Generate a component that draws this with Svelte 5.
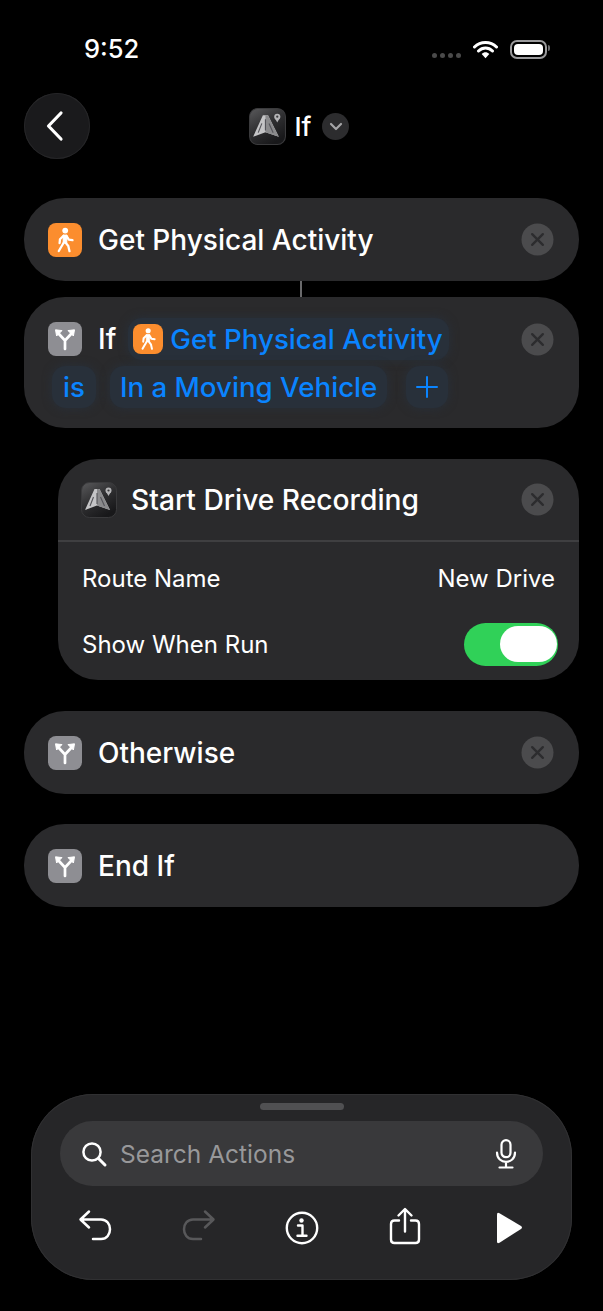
<script>
  let showWhenRun = $state(true);
</script>

{#snippet walkIcon()}
  <svg class="fill" viewBox="0 0 34 34">
    <circle cx="17.2" cy="7.6" r="2.9" fill="#fff" />
    <path d="M15 12 L19 12 L18.8 20 L15.2 20 Z" fill="#fff" stroke="#fff" stroke-width="0.8" stroke-linejoin="round" />
    <path d="M15.8 19.5 L10.8 28 M17.5 19.5 L20.3 23 L21.5 28.2 M15.5 12.8 L12 16.2 L11.6 20 M18.6 13 L20.8 16.6 L24.5 17.2" fill="none" stroke="#fff" stroke-width="2.3" stroke-linecap="round" stroke-linejoin="round" />
  </svg>
{/snippet}

{#snippet branchIcon()}
  <svg class="fill" viewBox="0 0 34 34">
    <path d="M17 27 V18.5 L10.5 11.5 M17 18.5 L23.5 11.5" fill="none" stroke="#fff" stroke-width="2.7" stroke-linecap="round" stroke-linejoin="round" />
    <path d="M7.5 7.8 L14 8.6 L8.6 14 Z M26.5 7.8 L20 8.6 L25.4 14 Z" fill="#fff" stroke="#fff" stroke-width="1" stroke-linejoin="round" />
  </svg>
{/snippet}

{#snippet closeButton()}
  <button class="close" aria-label="Remove">
    <svg viewBox="0 0 34 34" width="33" height="33">
      <circle cx="17" cy="17" r="16.5" fill="#4b4b4d" />
      <path d="M11.5 11.5 L22.5 22.5 M22.5 11.5 L11.5 22.5" stroke="#2c2c2e" stroke-width="2.4" stroke-linecap="round" />
    </svg>
  </button>
{/snippet}

{#snippet appIcon()}
  <svg class="fill" viewBox="0 0 36 36">
    <defs>
      <linearGradient id="tile" x1="0" y1="0" x2="0.6" y2="1">
        <stop offset="0" stop-color="#5a5a5c" />
        <stop offset="0.55" stop-color="#2e2e30" />
        <stop offset="1" stop-color="#18181a" />
      </linearGradient>
    </defs>
    <rect x="0.5" y="0.5" width="35" height="35" rx="8" fill="url(#tile)" stroke="#3a3a3c" />
    <path d="M13.5 7 L18.5 7 L29 28 L16 23.5 L4 28 Z" fill="#c4c4c6" />
    <path d="M16 7 L18.5 7 L29 28 L16 23.5 Z" fill="#8a8a8c" />
    <path d="M16 11 V22 M12.5 15 L9 24 M19.5 15 L23.5 24" stroke="#55555a" stroke-width="1.1" />
    <circle cx="27.5" cy="8.5" r="3" fill="#b4b4b6" />
    <circle cx="27.5" cy="8.5" r="1.1" fill="#3a3a3c" />
    <path d="M25.2 10 L27.5 14 L29.8 10 Z" fill="#b4b4b6" />
  </svg>
{/snippet}

<div class="page">
  <div class="status">
    <span class="time">9:52</span>
    <div class="status-right">
      <div class="dots"><i></i><i></i><i></i><i></i></div>
      <svg width="25" height="19" viewBox="0 0 25 19">
        <path d="M1.5 7 C7.5 1 17.5 1 23.5 7 M5.5 11 C9.5 7 15.5 7 19.5 11" fill="none" stroke="#fff" stroke-width="3" stroke-linecap="round" />
        <path d="M8.7 14 C11 11.8 14 11.8 16.3 14 L12.5 18.2 Z" fill="#fff" />
      </svg>
      <div class="battery"><div class="cell"></div></div>
    </div>
  </div>

  <div class="nav">
    <button class="back" aria-label="Back">
      <svg width="20" height="32" viewBox="0 0 20 32">
        <path d="M16 3 L3.5 16 L16 29" fill="none" stroke="#fff" stroke-width="3.2" stroke-linecap="round" stroke-linejoin="round" />
      </svg>
    </button>
    <div class="title">
      <span class="title-icon">{@render appIcon()}</span>
      <span class="title-text">If</span>
      <span class="chev">
        <svg width="14" height="9" viewBox="0 0 14 9">
          <path d="M2 2 L7 7 L12 2" fill="none" stroke="#a5a5a7" stroke-width="2.2" stroke-linecap="round" stroke-linejoin="round" />
        </svg>
      </span>
    </div>
  </div>

  <div class="list">
    <div class="card single">
      <span class="tile orange">{@render walkIcon()}</span>
      <span class="name">Get Physical Activity</span>
      {@render closeButton()}
    </div>

    <div class="connector"></div>

    <div class="card cond">
      <div class="cond-row first">
        <span class="tile gray">{@render branchIcon()}</span>
        <span class="name if">If</span>
        <span class="chip activity">
          <span class="tile small orange">{@render walkIcon()}</span>
          Get Physical Activity
        </span>
        {@render closeButton()}
      </div>
      <div class="cond-row second">
        <span class="chip is">is</span>
        <span class="chip moving">In a Moving Vehicle</span>
        <span class="chip plus">
          <svg width="24" height="24" viewBox="0 0 24 24">
            <path d="M12 2 V22 M2 12 H22" stroke="#0a84ff" stroke-width="2" stroke-linecap="round" />
          </svg>
        </span>
      </div>
    </div>

    <div class="card nested">
      <div class="nested-head">
        <span class="tile app">{@render appIcon()}</span>
        <span class="name">Start Drive Recording</span>
        {@render closeButton()}
      </div>
      <div class="field first-field">
        <span>Route Name</span>
        <span>New Drive</span>
      </div>
      <div class="field">
        <span>Show When Run</span>
        <button class="toggle" class:on={showWhenRun} aria-label="Show When Run" onclick={() => (showWhenRun = !showWhenRun)}>
          <span class="thumb"></span>
        </button>
      </div>
    </div>

    <div class="card single otherwise">
      <span class="tile gray">{@render branchIcon()}</span>
      <span class="name">Otherwise</span>
      {@render closeButton()}
    </div>

    <div class="card single end">
      <span class="tile gray">{@render branchIcon()}</span>
      <span class="name">End If</span>
    </div>
  </div>

  <div class="panel">
    <div class="handle"></div>
    <div class="search">
      <svg width="28" height="28" viewBox="0 0 28 28">
        <circle cx="12" cy="12" r="8.6" fill="none" stroke="#fff" stroke-width="2.5" />
        <path d="M18.5 18.5 L25 25" stroke="#fff" stroke-width="3" stroke-linecap="round" />
      </svg>
      <span class="placeholder">Search Actions</span>
      <svg class="mic" width="22" height="30" viewBox="0 0 22 30">
        <rect x="6.5" y="1.2" width="9" height="17" rx="4.5" fill="none" stroke="#fff" stroke-width="2.2" />
        <path d="M2 13.5 C2 26 20 26 20 13.5 M11 23 V28 M4.5 28.5 H17.5" fill="none" stroke="#fff" stroke-width="2.2" stroke-linecap="round" />
      </svg>
    </div>
    <div class="tools">
      <button aria-label="Undo">
        <svg width="34" height="34" viewBox="0 0 34 34">
          <path d="M11 3.5 L2.5 11.5 L11 19.5 M3.5 11.5 H23 C35 11.5 35 31 23 31 H15" fill="none" stroke="#fff" stroke-width="2.5" stroke-linecap="round" stroke-linejoin="round" />
        </svg>
      </button>
      <button aria-label="Redo">
        <svg width="34" height="34" viewBox="0 0 34 34">
          <path d="M23 3.5 L31.5 11.5 L23 19.5 M30.5 11.5 H11 C-1 11.5 -1 31 11 31 H19" fill="none" stroke="#58585a" stroke-width="2.5" stroke-linecap="round" stroke-linejoin="round" />
        </svg>
      </button>
      <button class="low" aria-label="Info">
        <svg width="34" height="34" viewBox="0 0 34 34">
          <circle cx="17" cy="17" r="15.2" fill="none" stroke="#fff" stroke-width="2.4" />
          <circle cx="16.5" cy="9.5" r="2.2" fill="#fff" />
          <path d="M13 14.5 H17.5 V24.5 M12.5 24.8 H21.5" fill="none" stroke="#fff" stroke-width="2.4" stroke-linecap="round" stroke-linejoin="round" />
        </svg>
      </button>
      <button class="share" aria-label="Share">
        <svg width="32" height="38" viewBox="0 0 32 38">
          <path d="M10 13.5 H5.5 Q2 13.5 2 17 V32.5 Q2 36 5.5 36 H26.5 Q30 36 30 32.5 V17 Q30 13.5 26.5 13.5 H22 M16 24.5 V2.5 M9.5 8.5 L16 2 L22.5 8.5" fill="none" stroke="#fff" stroke-width="2.4" stroke-linecap="round" stroke-linejoin="round" />
        </svg>
      </button>
      <button class="low" aria-label="Run">
        <svg width="30" height="34" viewBox="0 0 30 34">
          <path d="M3 3.5 Q3 1 5.5 2.3 L27 15 Q29 16.5 27 18 L5.5 31.7 Q3 33 3 30.5 Z" fill="#fff" />
        </svg>
      </button>
    </div>
  </div>
</div>

<style>
  :global(body) {
    background: #000;
  }

  .page {
    width: 603px;
    height: 1311px;
    display: flex;
    flex-direction: column;
    background: #000;
    color: #fff;
    font-family: Inter, "Liberation Sans", sans-serif;
    overflow: hidden;
  }

  button {
    border: 0;
    padding: 0;
    background: none;
    color: inherit;
    font: inherit;
    display: flex;
  }

  .status {
    height: 93px;
    box-sizing: border-box;
    padding: 34px 53px 0 84px;
    display: flex;
    justify-content: space-between;
    align-items: flex-start;
  }

  .time {
    font-size: 25.5px;
    line-height: 30px;
    font-weight: 500;
  }

  .status-right {
    display: flex;
    align-items: center;
    gap: 12px;
    height: 30px;
  }

  .dots {
    display: flex;
    gap: 3px;
    margin-top: 12px;
  }

  .dots i {
    width: 5px;
    height: 5px;
    border-radius: 50%;
    background: #4a4a4a;
  }

  .battery {
    position: relative;
    width: 37px;
    height: 19px;
    box-sizing: border-box;
    border: 2px solid #9a9a9c;
    border-radius: 7px;
    padding: 2px;
    margin-right: 3px;
  }

  .battery::after {
    content: "";
    position: absolute;
    right: -5px;
    top: 3px;
    width: 2px;
    height: 6px;
    background: #6d6d6f;
    border-radius: 0 2px 2px 0;
  }

  .cell {
    height: 100%;
    background: #fff;
    border-radius: 4px;
  }

  .nav {
    height: 66px;
    padding: 0 24px;
    display: grid;
    grid-template-columns: 66px 1fr 66px;
    align-items: center;
  }

  .back {
    width: 66px;
    height: 66px;
    border-radius: 50%;
    background: #1a1a1c;
    box-shadow: inset 0 0 0 1px #262628;
    align-items: center;
    justify-content: center;
    padding-right: 4px;
    box-sizing: border-box;
  }

  .title {
    grid-column: 2;
    display: flex;
    align-items: center;
    justify-content: center;
    margin-right: 5px;
  }

  .title-icon {
    width: 37px;
    height: 37px;
    display: block;
  }

  .title-text {
    font-size: 26px;
    font-weight: 500;
    margin-left: 9px;
  }

  .chev {
    width: 27px;
    height: 27px;
    margin-left: 11px;
    border-radius: 50%;
    background: #2c2c2e;
    display: flex;
    align-items: center;
    justify-content: center;
  }

  .list {
    margin-top: 39px;
    padding: 0 24px;
    display: flex;
    flex-direction: column;
  }

  .card {
    background: #2a2a2c;
    border-radius: 41px;
  }

  .single {
    height: 83px;
    box-sizing: border-box;
    padding: 0 25px 0 24px;
    display: flex;
    align-items: center;
  }

  .otherwise {
    margin-top: 31px;
  }

  .end {
    margin-top: 30px;
  }

  .tile {
    width: 34px;
    height: 34px;
    border-radius: 8px;
    flex: none;
    display: block;
  }

  .tile.small {
    width: 30px;
    height: 30px;
  }

  .tile.app {
    width: 36px;
    height: 36px;
  }

  .orange {
    background: #fb8d2e;
  }

  .gray {
    background: #8e8e93;
  }

  .fill {
    width: 100%;
    height: 100%;
    display: block;
  }

  .name {
    font-size: 28px;
    font-weight: 500;
    margin-left: 16px;
    white-space: nowrap;
  }

  .close {
    margin-left: auto;
    flex: none;
  }

  .connector {
    width: 2px;
    height: 16px;
    margin-left: 276px;
    background: #6a6a6c;
  }

  .cond {
    height: 131px;
    box-sizing: border-box;
    padding: 21px 25px 0 24px;
  }

  .cond-row {
    display: flex;
    align-items: center;
  }

  .first {
    height: 42px;
  }

  .first .if {
    margin-left: 16px;
  }

  .second {
    margin-top: 6px;
    margin-left: 4px;
  }

  .chip {
    height: 42px;
    box-sizing: border-box;
    display: flex;
    align-items: center;
    color: #0a84ff;
    font-size: 27.7px;
    font-weight: 500;
    border-radius: 14px;
    background: #28303a;
    box-shadow: 0 0 10px 0 #28303a;
    white-space: nowrap;
  }

  .activity {
    margin-left: 12px;
    padding: 0 6px 0 5px;
    gap: 7px;
  }

  .is {
    padding: 0 11px;
  }

  .moving {
    margin-left: 14px;
    padding: 0 10px;
  }

  .plus {
    margin-left: 19px;
    padding: 0 9px;
  }

  .nested {
    margin-top: 31px;
    margin-left: 34px;
    height: 221px;
    border-radius: 40px;
  }

  .nested-head {
    height: 83px;
    box-sizing: border-box;
    padding: 0 25px 0 23px;
    display: flex;
    align-items: center;
    border-bottom: 2px solid #3f3f41;
  }

  .nested-head .name {
    margin-left: 14px;
    font-size: 28.2px;
  }

  .field {
    height: 66px;
    padding: 0 22px 0 24px;
    display: flex;
    justify-content: space-between;
    align-items: center;
    font-size: 24px;
    font-weight: 400;
  }

  .first-field {
    margin-top: 3px;
    padding-right: 24px;
  }

  .toggle {
    width: 94px;
    height: 43px;
    border-radius: 22px;
    background: #48484a;
    padding: 3px 1px 4px;
    box-sizing: border-box;
    margin-right: -1px;
  }

  .toggle.on {
    background: #30d158;
    justify-content: flex-end;
  }

  .thumb {
    width: 57px;
    height: 36px;
    border-radius: 18px;
    background: #fff;
    display: block;
  }

  .panel {
    margin: auto 31px 31px;
    height: 186px;
    box-sizing: border-box;
    padding: 9px 29px 0;
    border-radius: 62px;
    background: #262628;
    box-shadow: inset 0 0 0 1px #303032;
    display: flex;
    flex-direction: column;
  }

  .handle {
    width: 84px;
    height: 7px;
    border-radius: 4px;
    background: #505052;
    align-self: center;
  }

  .search {
    margin-top: 11px;
    height: 65px;
    border-radius: 33px;
    background: #39393b;
    padding: 0 26px 0 20px;
    display: flex;
    align-items: center;
  }

  .placeholder {
    margin-left: 12px;
    font-size: 24.5px;
    font-weight: 400;
    color: #98989a;
  }

  .mic {
    margin-left: auto;
  }

  .tools {
    margin-top: 18px;
    padding: 0 14px 0 15px;
    display: flex;
    justify-content: space-between;
    align-items: center;
  }

  .tools button {
    width: 40px;
    height: 42px;
    align-items: center;
    justify-content: center;
  }

  /* info and play sit a little under the arrows */
  .tools .low {
    padding-top: 6px;
  }

  .tools .share {
    padding: 2px 2px 0 0;
  }
</style>
